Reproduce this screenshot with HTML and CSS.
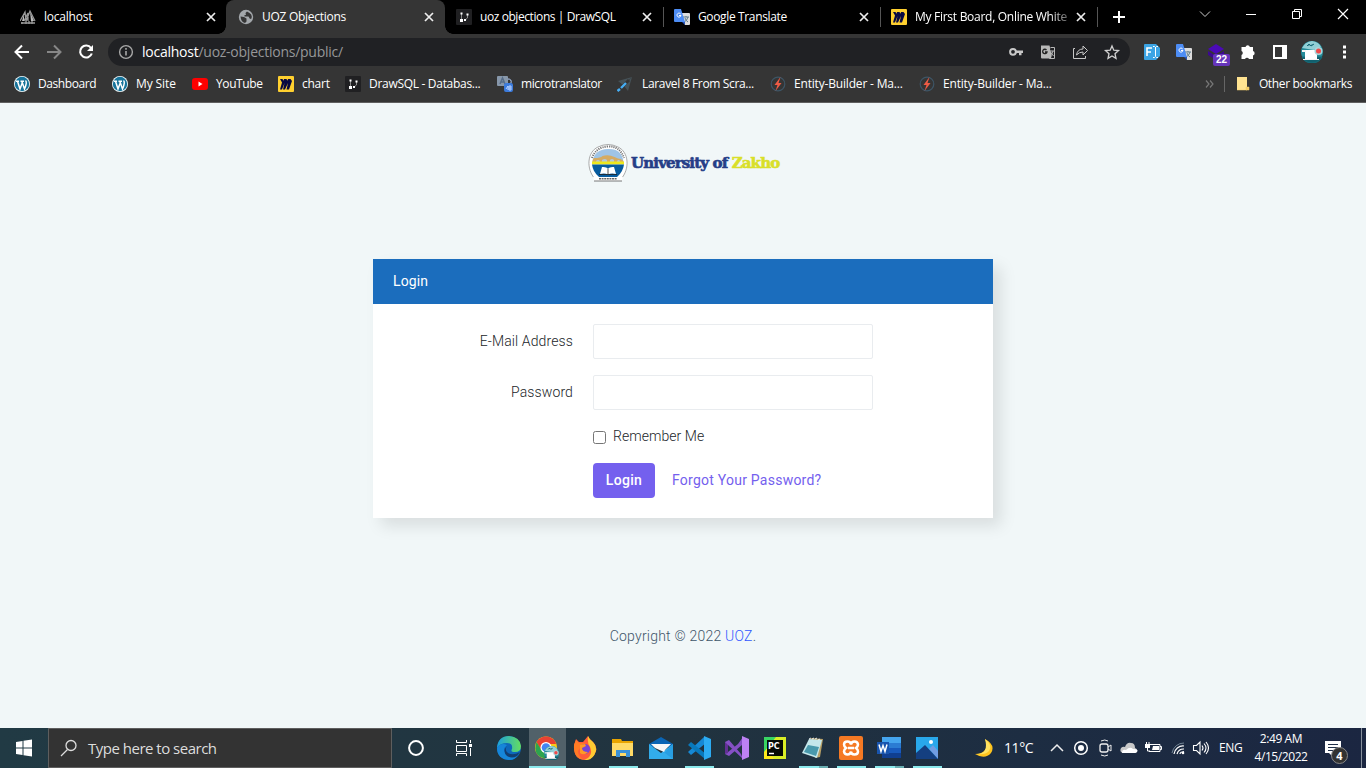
FILE: index.html
```html
<!DOCTYPE html>
<html lang="en">
<head>
<meta charset="utf-8">
<title>UOZ Objections</title>
<link rel="stylesheet" href="styles.css">
</head>
<body>
<svg class="defs" width="0" height="0" aria-hidden="true">
  <defs>
    <symbol id="x" viewBox="0 0 16 16"><path d="M4 4l8 8M12 4l-8 8" stroke="#eee" stroke-width="1.7"/></symbol>
    <symbol id="draw" viewBox="0 0 16 16"><rect width="16" height="16" rx="1" fill="#202022"/><path d="M5.500 4v7M11.500 5v4l-2.500 2" stroke="#888" fill="none"/><path d="M4.500 3.500h2v2h-2zM4 10h3v3H4zM10.500 4.500h2v2h-2zM8 10h2v2H8z" fill="#fff"/></symbol>
    <symbol id="trans" viewBox="0 0 16 16"><path d="M7 4h8q1 0 1 1v10q0 1-1 1h-4z" fill="#ddd"/><path d="M9 8h6M12 7v1M14 8q-1 4-4 5M11 9q1 3 3 4" stroke="#607d8b" fill="none"/><path d="M1 0h6l4 13H1q-1 0-1-1V1q0-1 1-1z" fill="#4d8df5"/><path d="M6.700 5A2 2 0 1 0 7 6.500H5" stroke="#fff" fill="none"/><path d="M8 13h3v3z" fill="#2855b8"/></symbol>
    <symbol id="miro" viewBox="0 0 16 16"><rect width="16" height="16" rx="1" fill="#ffd02f"/><path d="M2 3h2.500l1 1.800L6 3h2.500l1 1.800.5-1.800h2.500L14 5l-3 8.500H8.500L10 7l-3 6.500H5L6.500 7 4 13.500H2L4 6.500z" fill="#090942"/></symbol>
    <symbol id="wp" viewBox="0 0 16 16"><circle cx="8" cy="8" r="8" fill="#f2fafc"/><circle cx="8" cy="8" r="7.200" fill="#17749b"/><path d="M2 5.200h3M6.500 5.200h3.500M3.500 5.200L6 13l2.200-6M7.800 5.200L10.500 13q3-7 1-8.500" stroke="#fff" stroke-width="1.500" fill="none"/></symbol>
    <symbol id="bolt" viewBox="0 0 16 16"><circle cx="8" cy="8" r="6.800" fill="none" stroke="#3d5566" stroke-width="1.200"/><path d="M10.500 1L4.500 9h3l-2 6 6-8H8.500z" fill="#ef5b45"/></symbol>
    <symbol id="avatar" viewBox="0 0 22 22"><circle cx="11" cy="11" r="11" fill="#258b99"/><path d="M1 7q3-6 10-7 7 1 9 6l-7 3z" fill="#92d0d6"/><path d="M6 5l2-2 2 2 3-2M1 16h20q-3 6-10 6T1 16z" fill="#12606e" stroke="#166b79"/><rect x="4" y="9" width="12" height="9" fill="#fff"/><path d="M1 9h4v2H1zM2 18h16v1H2z" fill="#f5f5f5"/><circle cx="17.500" cy="10" r="4" fill="#a9d6da"/><circle cx="17.500" cy="10" r="2.500" fill="#ee4b4b"/></symbol>
  </defs>
</svg>

<header class="browser">
  <div class="tabs">
    <div class="tab t1"><svg class="fav" viewBox="0 0 16 16"><path d="M0 12l5-9 1 9 4-10 5 10M4 12l4-8v8M1 14h14M2 13v2M6 12v3M9 12v3M12 12v3" stroke="#999" fill="none" stroke-width="1.300"/><path d="M10 3l4 9h-3zM4 5v7H2z" fill="#bbb"/></svg><span class="title">localhost</span><svg class="close"><use href="#x"/></svg></div>
    <div class="tab t2 active"><svg class="fav" viewBox="0 0 16 16"><circle cx="8" cy="8" r="7.200" fill="#a3a7ab"/><path d="M2.500 7.500L6 8l2.500 1.500v3L7 14Q3 13 2.500 7.500zM9 2.500L7.500 4 8 6H6.500v1.500h4L12 10l1.500-.5Q15 5 9 2.500z" fill="#353535"/></svg><span class="title">UOZ Objections</span><svg class="close"><use href="#x"/></svg></div>
    <div class="tab t3"><svg class="fav"><use href="#draw"/></svg><span class="title">uoz objections | DrawSQL</span><svg class="close"><use href="#x"/></svg></div>
    <div class="tab t4 sep"><svg class="fav"><use href="#trans"/></svg><span class="title">Google Translate</span><svg class="close"><use href="#x"/></svg></div>
    <div class="tab t5 sep"><svg class="fav"><use href="#miro"/></svg><span class="title fade">My First Board, Online White</span><svg class="close"><use href="#x"/></svg></div>
    <svg class="plus" viewBox="0 0 44 34"><path d="M.5 7v20" stroke="#555"/><path d="M16 17h12M22 11v12" stroke="#fff" stroke-width="2"/></svg>
    <div class="controls">
      <svg viewBox="0 0 46 28"><path d="M18 11.500l5 5 5-5" stroke="#ccc" fill="none"/></svg>
      <svg viewBox="0 0 46 28"><path d="M18 14.500h10" stroke="#fff"/></svg>
      <svg viewBox="0 0 46 28"><path d="M18.500 11.500h7v7h-7zM20.500 11V9.500h7v7H26" stroke="#fff" fill="none"/></svg>
      <svg viewBox="0 0 46 28"><path d="M18 9l10 10M28 9L18 19" stroke="#fff" stroke-width="1.200"/></svg>
    </div>
  </div>
  <div class="toolbar">
    <div class="nav">
      <svg viewBox="0 0 32 36"><path d="M29 18H16M22 11.500L15.500 18l6.500 6.500" stroke="#fff" stroke-width="2" fill="none"/></svg>
      <svg viewBox="0 0 32 36"><path d="M15 18h13M22 11.500l6.500 6.500-6.500 6.500" stroke="#878787" stroke-width="2" fill="none"/></svg>
      <svg viewBox="0 0 32 36"><path d="M27 14a6 6 0 1 0 .8 5.500" stroke="#fff" stroke-width="2.100" fill="none"/><path d="M29 11v6h-6z" fill="#fff"/></svg>
    </div>
    <div class="omnibox">
      <svg class="info" viewBox="0 0 16 16"><circle cx="8" cy="8" r="6.400" fill="none" stroke="#a8a8a8" stroke-width="1.400"/><path d="M8 7v4.500M8 4v1.700" stroke="#a8a8a8" stroke-width="1.600"/></svg>
      <span class="url"><b>localhost</b>/uoz-objections/public/</span>
      <svg class="act" viewBox="0 0 32 28"><path d="M15 12.500h8v2.500h-1.500v2.300H19V15h-4z" fill="#c8c8c8"/><circle cx="13" cy="13.800" r="2.900" stroke="#c8c8c8" stroke-width="2" fill="none"/></svg>
      <svg class="act" viewBox="0 0 32 28"><path d="M9 7.500h8.500l3 13H10q-1 0-1-1z" fill="#b8b8b8"/><path d="M18.500 9.500h4v11h-5l-1-2.500" stroke="#b8b8b8" fill="none"/><path d="M14.500 12a2.200 2.200 0 1 0 .5 2H13" stroke="#222" stroke-width="1.300" fill="none"/><path d="M18 11h4v9h-3l1-3z" fill="#202124"/><path d="M17 13h5M21 13q-1 4-3 4M18.500 14l3 4" stroke="#b8b8b8" fill="none"/></svg>
      <svg class="act" viewBox="0 0 32 28"><path d="M11 10.500H9.500v10h12V18" stroke="#c8c8c8" fill="none"/><path d="M12.500 17q1-6 6.500-6V8l4.500 4.500L19 17v-3q-4 0-6.500 3z" stroke="#c8c8c8" fill="none"/></svg>
      <svg class="act" viewBox="0 0 32 28"><path d="M16 8l1.800 4.200 4.700.4-3.500 3.100 1 4.600-4-2.400-4 2.400 1-4.600-3.500-3.100 4.700-.4z" stroke="#d0d0d0" stroke-width="1.300" fill="none"/></svg>
    </div>
    <div class="exts">
      <svg viewBox="0 0 32 36"><path d="M9 10h11l4 4v8l-4 4H9q-1 0-1-1V11q0-1 1-1z" fill="#3ba4e4"/><path d="M11 22v-8h5M11 18h4" stroke="#fff" stroke-width="1.600" fill="none"/><path d="M17 12.500h1.500l1 1 1-1H22M19.500 13v9M17 23.500h1.500l1-1 1 1H22" stroke="#fff" fill="none"/></svg>
      <svg viewBox="0 0 32 36"><use href="#trans" x="8" y="10" width="16" height="16"/></svg>
      <div class="badged"><svg viewBox="0 0 32 36"><path d="M16 10l8 5-8 5-8-5z" fill="#4b0ab8"/><path d="M8 17l8 5 8-5v4l-8 5-8-5z" fill="#3c0992"/></svg><span class="badge">22</span></div>
      <svg viewBox="0 0 32 36"><path d="M10 13h3.500a2.300 2.300 0 0 1 4.400 0H21v4a2.300 2.300 0 0 1 0 4.400V25h-4a2.200 2.200 0 0 0-4 0H9.500v-4a2.200 2.200 0 0 0 0-4V13z" fill="#fff"/></svg>
      <svg viewBox="0 0 32 36"><path d="M9 11h14v14H9zM11 13v10h7V13z" fill="#fff" fill-rule="evenodd"/></svg>
      <svg viewBox="0 0 32 36"><use href="#avatar" x="5" y="7" width="22" height="22"/></svg>
      <svg viewBox="0 0 32 36"><path d="M15 11.500h3v3h-3zM15 16.500h3v3h-3zM15 21.500h3v3h-3z" fill="#fff"/></svg>
    </div>
  </div>
  <div class="bookmarks">
    <div class="bm b1"><svg><use href="#wp"/></svg><span>Dashboard</span></div>
    <div class="bm b2"><svg><use href="#wp"/></svg><span>My Site</span></div>
    <div class="bm b3"><svg viewBox="0 0 16 16"><rect y="2" width="16" height="12" rx="3" fill="#f00"/><path d="M6.500 5.500v5l4-2.500z" fill="#fff"/></svg><span>YouTube</span></div>
    <div class="bm b4"><svg><use href="#miro"/></svg><span>chart</span></div>
    <div class="bm b5"><svg><use href="#draw"/></svg><span>DrawSQL - Databas...</span></div>
    <div class="bm b6"><svg viewBox="0 0 16 16"><rect width="11" height="10" rx="1" fill="#8797aa"/><path d="M3 8l2.500-6L8 8M4 6h3" stroke="#566c88" stroke-width="1.500" fill="none"/><rect x="7" y="7" width="9" height="9" rx="2" fill="#3c7bdc"/><path d="M9 13l2-3v4M12 10h2v4h-2zM12 12h2M11 3q4 0 3 4" stroke="#b7d1ff" fill="none"/></svg><span>microtranslator</span></div>
    <div class="bm b7"><svg viewBox="0 0 16 16"><path d="M15 1L1 5l5 4zM15 1l-4 14-4-5z" fill="#465258"/><path d="M12 4L5 11" stroke="#353535" stroke-width="3"/><path d="M9 7l-5 5M3 13l-2.500 2" stroke="#46aef5" stroke-width="2.400"/></svg><span>Laravel 8 From Scra...</span></div>
    <div class="bm b8"><svg><use href="#bolt"/></svg><span>Entity-Builder - Ma...</span></div>
    <div class="bm b9"><svg><use href="#bolt"/></svg><span>Entity-Builder - Ma...</span></div>
    <div class="others"><svg class="more" viewBox="0 0 10 10"><path d="M1 1.500L4 5 1 8.500M5 1.500L8 5 5 8.500" stroke="#777" fill="none" stroke-width="1.200"/></svg><i></i><svg viewBox="0 0 16 16"><path d="M2 1h10v10h2v3H2z" fill="#ffe391"/><path d="M11 11h3v3h-3zM2 14h10" fill="#f3cd68" stroke="#f3cd68" stroke-width=".5"/></svg><span>Other bookmarks</span></div>
  </div>
</header>

<main class="page">
  <div class="brand">
    <svg viewBox="0 0 40 40">
      <path d="M7 36C-2 26-1 9 10 4q10-5 20 0c11 5 12 22 3 32z" fill="#fff" stroke="#888" stroke-width=".7"/>
      <path d="M4 15Q8 4 20 3.500T36 15" fill="none" stroke="#777" stroke-width="2" stroke-dasharray="1.200 1"/>
      <path d="M4.500 19Q6 6.500 20 6t15.500 13z" fill="#9fc4e6"/>
      <path d="M4.500 19q0-4 2-4 6 0 8-2 6-2 12 1 4 2 6 2 3 1 3 3z" fill="#d5ab62"/>
      <path d="M8 19v-1q2-2 4 0v1zM14 19v-2q3-2 5 0v2zM22 19v-2q2-2 4 0v2zM29 19v-1q2-2 3 0v1z" fill="#b5c8d8"/>
      <path d="M4 18.500h32v3H4z" fill="#eee81c"/>
      <path d="M4 21.500h32Q35 29 29 34H11Q5 29 4 21.500z" fill="#075b9e"/>
      <path d="M12 31l2-7q4-.5 6 1.500 2-2 6-1.500l2 7q-5-1-8 .5-3-1.500-8-.5z" fill="#fff"/><path d="M20 25.500v6M11 31.500h18" stroke="#222" stroke-width=".8"/>
      <path d="M5 34h30l-1 4H6z" fill="#fff"/><path d="M11 35.800h18" stroke="#666" stroke-width="1.600" stroke-dasharray="2 .6"/><path d="M6 38h28" stroke="#555" stroke-width=".8"/>
    </svg>
    <strong>University of <em>Zakho</em></strong>
  </div>
  <form class="card">
    <div class="card-head">Login</div>
    <div class="card-body">
      <div class="row"><label for="email">E-Mail Address</label><input id="email" type="email"></div>
      <div class="row"><label for="pw">Password</label><input id="pw" type="password"></div>
      <div class="remember"><input id="rem" type="checkbox"><label for="rem">Remember Me</label></div>
      <div class="actions"><button type="button">Login</button><a>Forgot Your Password?</a></div>
    </div>
  </form>
  <footer>Copyright © 2022 <a>UOZ</a>.</footer>
</main>

<div class="taskbar">
  <svg class="start" viewBox="0 0 48 40"><path d="M16 14l6.500-1v6.500H16zM23.500 12.800L32 11.500v8h-8.500zM16 20.500h6.500V27L16 26zM23.500 20.500H32v8l-8.500-1.300z" fill="#fff"/></svg>
  <div class="search"><svg viewBox="0 0 18 18"><circle cx="11" cy="6.500" r="5" fill="none" stroke="#ddd" stroke-width="1.300"/><path d="M7.500 10.500L1 17" stroke="#ddd" stroke-width="1.300"/></svg><span>Type here to search</span></div>
  <svg class="wide" viewBox="0 0 48 40"><circle cx="24" cy="20" r="6.900" fill="none" stroke="#fff" stroke-width="2"/></svg>
  <svg class="wide" viewBox="0 0 48 40"><path d="M16.500 12v2.500h10V12M16.500 17.500h10v6h-10zM16.500 28v-2.500h10V28M30.500 12v3M30.500 20v8" stroke="#fff" fill="none"/><path d="M29 16h3v3h-3z" fill="#fff"/></svg>
  <div class="apps">
    <div class="app"><svg viewBox="0 0 24 24"><defs><linearGradient id="eg"><stop stop-color="#1c9fdc"/><stop offset="1" stop-color="#64dd60"/></linearGradient></defs><circle cx="12" cy="12" r="12" fill="#0d68bb"/><path d="M0 12Q1 0 12 0q11 1 12 10 0 6-6 6-5 0-3-3 1-6-5-6Q3 7 0 12z" fill="url(#eg)"/><path d="M10 9q-6 5 0 10 5 3 11-1-2 6-9 6Q0 23 0 12 4 6 10 9z" fill="#1686d9"/><path d="M10 10q-3 4 1 7 5 3 12-1l-3 4q-5 3-10 0-5-5 0-10z" fill="#123e70"/></svg></div>
    <div class="app current"><svg viewBox="0 0 24 24"><circle cx="11" cy="11.500" r="11" fill="#fbc918"/><path d="M1.500 6Q5 .5 11 .5T20.500 6L21 8H11l-5 6z" fill="#e84133"/><path d="M1.500 6l5 8 6 2-3 6.500Q-3 19 1.500 6z" fill="#2da44f"/><circle cx="11" cy="11.500" r="5.500" fill="#fff"/><circle cx="11" cy="11.500" r="4.300" fill="#4285f4"/><use href="#avatar" x="9" y="10" width="15" height="15"/></svg><i></i></div>
    <div class="app"><svg viewBox="0 0 24 24"><path d="M1 9l2-6 3 3h4l5-6q1 3 5 6 4 4 3 9-3 9-12 9T1 13z" fill="#ff5c3a"/><path d="M15 0q1 3 5 6 4 4 3 9-3 10-12 9 10-4 6-13-3-4-2-11z" fill="#ffca32"/><path d="M1 9l2-5 3 3h6l-4 4-3 4q0 6 6 9Q0 22 1 9z" fill="#ff7b24"/><circle cx="12" cy="13" r="5" fill="#7544d8"/><path d="M7 9l5-1 1 2-4 2q0 4 6 4-4 4-8 1z" fill="#ff9a24"/></svg></div>
    <div class="app"><svg viewBox="0 0 24 24"><path d="M1 3h9l1 2h11v5H1z" fill="#e9a400"/><path d="M1 7h21v13H1z" fill="#ffda67"/><path d="M5 14h14v7h-4v-4H9v4H5z" fill="#3a91d7"/></svg><i></i></div>
    <div class="app"><svg viewBox="0 0 24 24"><path d="M0 8l12-7 12 7v3H0z" fill="#0b65b4"/><path d="M0 8v15h24V8L12 17z" fill="#32aceb"/><path d="M2 8h20l-6 6-1 2-9-4z" fill="#f8f8f8"/><path d="M12 14l3 3 9-9v15z" fill="#1785d1" opacity=".35"/></svg></div>
    <div class="app"><svg viewBox="0 0 24 24"><path d="M17 1L1 16l3 3L19 7z" fill="#1689d5"/><path d="M1 9l3-3 15 12-1 5z" fill="#0879bd"/><path d="M17 0l7 3v18l-7 3z" fill="#2cabf2"/></svg><i></i></div>
    <div class="app"><svg viewBox="0 0 24 24"><path d="M0 6l4-2 12 14 2 5L3 9v7l10-8 5-7-1 8L4 20l-4-2z" fill="#8550c5"/><path d="M0 6l3 3v8l-3 1z" fill="#633095"/><path d="M17 0l7 3v18l-7 3z" fill="#bd81f4"/></svg></div>
    <div class="app"><svg viewBox="0 0 24 24"><rect x="1" y="1" width="22" height="22" fill="#d9ee26"/><path d="M1 8v15h10z" fill="#ffe91b"/><path d="M1 1h12L1 16z" fill="#38d663"/><rect x="4" y="4" width="16" height="16" fill="#060b05"/><path d="M6 17.500h5" stroke="#fff" stroke-width="1.500"/><text x="5" y="12.500" class="pc">PC</text></svg></div>
    <div class="app"><svg viewBox="0 0 24 24"><path d="M10 2l12 1-3 18-5 1z" fill="#b8a066"/><path d="M8 3l13 1-5 18-15-5z" fill="#c5e7eb"/><path d="M7 9l11 2-3 9-12-4z" fill="#4999ac"/><path d="M8 3l2-1M11 3l2-1M14 3l2-1M17 4l2-1" stroke="#eee"/></svg><i class="multi"></i></div>
    <div class="app"><svg viewBox="0 0 24 24"><rect width="24" height="24" rx="2" fill="#f57924"/><path d="M8.500 5.500q3 0 3.500 3 .5-3 3.500-3T19 8.500q0 2-2 3.500 2 1.500 2 3.500 0 3-3.500 3t-3.500-3q-.5 3-3.500 3T5 15.500Q5 13.500 7 12 5 10.500 5 8.500q0-3 3.500-3zM9 12h6" stroke="#fff" stroke-width="2.500" fill="none"/></svg><i></i></div>
    <div class="app"><svg viewBox="0 0 24 24"><path d="M5 1h19v6H5z" fill="#45a5ee"/><path d="M5 7h19v5H5z" fill="#2b7cd3"/><path d="M5 12h19v5H5z" fill="#185abd"/><path d="M5 17h19v5H5z" fill="#103f91"/><rect y="6" width="12" height="12" fill="#1854ae"/><path d="M2 8.500l2 7 2-6 2 6 2-7" stroke="#fff" stroke-width="1.500" fill="none"/></svg><i class="multi"></i></div>
    <div class="app"><svg viewBox="0 0 24 24"><rect x="1" y="1" width="22" height="22" fill="#29a8eb"/><path d="M14 13l4-4 5 6v8z" fill="#719de2"/><path d="M1 17l9-8 13 14H1z" fill="#143f80"/><circle cx="16" cy="6" r="2" fill="#fff"/></svg><i></i></div>
  </div>
  <div class="tray">
    <svg class="moon" viewBox="0 0 18 18"><path d="M10 0q11 6 6 14-6 7-16 1 7 0 10-4t0-11z" fill="#ffc41e"/><path d="M10 0q8 6 4 12-4 4-12 3 6 0 8-4t0-11z" fill="#ffe261"/></svg>
    <span class="temp">11°C</span>
    <svg class="ti" viewBox="0 0 24 24"><path d="M6 15l6-6 6 6" stroke="#eee" stroke-width="1.500" fill="none"/></svg>
    <svg class="ti" viewBox="0 0 24 24"><circle cx="12" cy="12" r="6.300" stroke="#fff" stroke-width="1.500" fill="none"/><circle cx="12" cy="12" r="3" fill="#fff"/></svg>
    <svg class="ti" viewBox="0 0 24 24"><rect x="7" y="8" width="8" height="8" rx="2" stroke="#eee" stroke-width="1.300" fill="none"/><path d="M15 11l3-2v6l-3-2M8 5q4-2 7 0M8 19q4 2 7 0" stroke="#eee" fill="none"/></svg>
    <svg class="ti" viewBox="0 0 24 24"><path d="M6 17q-4-1-2-5 2-2 4-1 2-5 6-4 4 0 4 5 4 2 1 5z" fill="#c8c8c8"/><path d="M5 17q0-4 4-3 4-4 7-1 6 0 4 3l-2 1z" fill="#fff"/></svg>
    <svg class="ti" viewBox="0 0 24 24"><path d="M9 8.500h10v7H8M19 10.500h1.500v3H19" stroke="#fff" fill="none"/><path d="M12 10h6v4h-7zM4 8h5v4H4z" fill="#fff"/><path d="M5.500 6v3M8 6v3M6.500 11v4H9" stroke="#fff" fill="none"/></svg>
    <svg class="ti wifi" viewBox="0 0 24 24"><path d="M6 17A12 12 0 0 1 18 7" stroke="#718393" fill="none"/><path d="M8 18A9 9 0 0 1 18 10M11 18A7 7 0 0 1 18 13M14 18Q14 16 18 15.500" stroke="#fff" fill="none" stroke-width="1.200"/><circle cx="17" cy="17" r="1.300" fill="#fff"/></svg>
    <svg class="ti" viewBox="0 0 24 24"><path d="M3.500 9.500h3L10 6v12l-3.500-3.500h-3zM12 9.500q2 2.500 0 5M14 7.500q4 4.500 0 9M16 6q5 6 0 12" stroke="#fff" fill="none" stroke-width="1.100"/></svg>
    <span class="lang">ENG</span>
    <div class="clock"><span>2:49 AM</span><span>4/15/2022</span></div>
    <div class="notify"><svg viewBox="0 0 18 17"><path d="M1 1h16v12H9v4l-4-4H1z" fill="#fff"/><path d="M4 4.500h10M4 7.500h10M4 10.500h7" stroke="#20304a"/></svg><b>4</b></div>
  </div>
</div>
</body>
</html>
```
FILE: styles.css
```css
* { box-sizing: border-box; }
body { margin: 0; width: 1366px; height: 768px; overflow: hidden; display: flex; flex-direction: column; background: #f1f7f8; }
svg { display: block; flex: none; }
i { font-style: normal; }
.defs { position: absolute; }

.browser { height: 103px; flex: none; background: #353535; border-bottom: 1px solid #606060; color: #fff; font: 12px/16px "Open Sans", "Noto Sans", sans-serif; white-space: nowrap; }
.tabs { display: flex; height: 34px; background: #000; }
.tab { display: flex; align-items: center; height: 34px; padding-right: 8px; position: relative; }
.tab .fav, .close { width: 16px; height: 16px; }
.title { flex: 1; margin-left: 8px; letter-spacing: -.28px; }
.t1 .title { letter-spacing: -.22px; }
.t3 .title { letter-spacing: -.42px; }
.t4 .title { letter-spacing: -.36px; }
.t5 .title { letter-spacing: -.28px; }
.fade { -webkit-mask-image: linear-gradient(90deg, #000 85%, transparent 103%); mask-image: linear-gradient(90deg, #000 85%, transparent 103%); }
.t1 { width: 226px; padding-left: 20px; padding-right: 7px; }
.t2 { width: 219px; padding-left: 12px; }
.t3 { width: 218px; padding-left: 11px; }
.t4 { width: 217px; padding-left: 11px; }
.t5 { width: 216px; padding-left: 11px; padding-right: 7px; }
.active { background: #353535; border-radius: 8px 8px 0 0; }
.active::before, .active::after { content: ""; position: absolute; bottom: 0; width: 8px; height: 8px; }
.active::before { left: -8px; background: radial-gradient(circle at 0 0, #000 7.5px, #353535 8px); }
.active::after { right: -8px; background: radial-gradient(circle at 100% 0, #000 7.5px, #353535 8px); }
.sep { background: linear-gradient(#555, #555) 0 7px / 1px 20px no-repeat; }
.plus { width: 44px; height: 34px; margin-left: 1px; }
.controls { display: flex; margin-left: auto; }
.controls svg { width: 46px; height: 28px; }

.toolbar { display: flex; align-items: center; height: 36px; }
.nav { display: flex; width: 108px; }
.nav svg { width: 32px; height: 36px; }
.omnibox { display: flex; align-items: center; width: 1022px; height: 28px; padding: 0 2px 0 10px; border-radius: 14px; background: #202124; }
.info { width: 16px; height: 16px; }
.url { flex: 1; margin-left: 8px; color: #969799; font-size: 14px; line-height: 20px; letter-spacing: -.25px; }
.url b { font-weight: 400; color: #fff; }
.act { width: 32px; height: 28px; }
.exts { display: flex; margin-left: 6px; }
.exts svg { width: 32px; height: 36px; }
.badged { position: relative; }
.badge { position: absolute; left: 13px; top: 20px; width: 17px; height: 12px; border-radius: 2px; background: #6635bb; font: bold 10px/12px "Liberation Sans", sans-serif; text-align: center; }

.bookmarks { display: flex; align-items: center; height: 28px; padding: 0 14px; letter-spacing: -.25px; }
.bm { display: flex; align-items: center; gap: 8px; flex: none; }
.bm svg, .others svg { width: 16px; height: 16px; }
.b1 { width: 98px; letter-spacing: -.42px; }
.b2 { width: 80px; letter-spacing: -.1px; }
.b3 { width: 86px; letter-spacing: -.4px; }
.b4 { width: 67px; }
.b5 { width: 152px; letter-spacing: -.3px; }
.b6 { width: 120px; letter-spacing: -.42px; }
.b7 { width: 153px; gap: 9px; letter-spacing: -.34px; }
.b8 { width: 149px; letter-spacing: -.18px; }
.b9 { letter-spacing: -.18px; }
.others { display: flex; align-items: center; margin-left: auto; letter-spacing: -.36px; }
.others .more { width: 10px; height: 10px; }
.others i { width: 1px; height: 16px; margin: 0 10px 0 9px; background: #666; }
.others span { margin-left: 8px; }

.page { height: 625px; flex: none; display: flex; flex-direction: column; align-items: center; color: #3e5569; font: 300 14px/21px Roboto, sans-serif; }
.brand { display: flex; align-items: center; width: 190px; height: 40px; margin-top: 40px; }
.brand svg { width: 40px; height: 40px; }
.brand strong { margin-left: 3px; color: #253e87; font: bold 15px/20px "DejaVu Serif", serif; white-space: nowrap; letter-spacing: -.85px; -webkit-text-stroke: .6px; }
.brand em { color: #d9df29; font-style: normal; }
.card { width: 620px; height: 259px; margin: 76px 0 0; background: #fff; box-shadow: 8px 8px 15px rgba(0, 0, 0, .1); }
.card-head { height: 45px; padding: 12px 20px; background: #1b6dbd; color: #fff; font-weight: 400; letter-spacing: .1px; }
.card-body { padding: 20px; color: #212529; letter-spacing: .12px; }
.row { display: flex; align-items: center; height: 35px; margin-bottom: 16px; }
.row label { width: 180px; text-align: right; margin-right: 20px; }
.row input { width: 280px; height: 35px; border: 1px solid #e9ecef; border-radius: 2px; background: #fff; }
.remember { display: flex; align-items: center; height: 21px; margin-left: 200px; gap: 7px; letter-spacing: .05px; }
.remember input { width: 13px; height: 13px; margin: 1px 0 0; }
.actions { display: flex; align-items: center; margin: 16px 0 0 200px; gap: 17px; color: #7460ee; font-weight: 400; letter-spacing: .24px; }
.actions button { width: 62px; height: 35px; padding: 0 0 1px; border: 0; border-radius: 4px; background: #7460ee; color: #fff; font: 500 14px Roboto, sans-serif; letter-spacing: .3px; }
footer { margin-top: 108px; letter-spacing: .22px; }
footer a { color: #3157ff; }

.taskbar { height: 40px; flex: none; display: flex; background: linear-gradient(90deg, #213a44 0, #21333f 50%, #1d2d42 75%, #1b2641); color: #fff; font: 12px/18px "Open Sans", sans-serif; }
.start, .wide { width: 48px; height: 40px; }
.search { width: 344px; height: 40px; display: flex; align-items: center; padding-left: 11px; border: 1px solid #5e5e5e; background: #333; color: #ddd; font-size: 15px; letter-spacing: -.5px; }
.search svg { width: 18px; height: 18px; margin-right: 10px; }
.apps { display: flex; margin-left: 2px; }
.app { width: 38px; height: 40px; display: flex; align-items: center; justify-content: center; position: relative; }
.app svg { width: 24px; height: 24px; }
.app i { position: absolute; bottom: 0; left: 5px; width: 29px; height: 2px; background: #8be9ec; }
.app .multi { background: linear-gradient(90deg, #8be9ec 20px, #69aeb2 20px); }
.current { background: linear-gradient(#516169, #516169) 1px 0 / 37px 40px no-repeat; }
.app.current i { left: 1px; width: 37px; }
.pc { font: bold 8px "DejaVu Sans", sans-serif; fill: #fff; }
.tray { flex: 1; display: flex; align-items: center; padding-left: 29px; padding-right: 4px; background: linear-gradient(#87909c, #87909c) 415px 0 / 1px 40px no-repeat; }
.moon { width: 18px; height: 18px; }
.temp { width: 41px; margin-left: 11px; font-size: 14px; letter-spacing: -.4px; }
.ti { width: 24px; height: 24px; }
.wifi { margin-left: 1px; }
.lang { width: 30px; margin-left: 5px; letter-spacing: -.4px; }
.clock { width: 64px; display: flex; flex-direction: column; text-align: center; letter-spacing: -.42px; }
.notify { position: relative; margin-left: 11px; }
.notify svg { width: 18px; height: 17px; }
.notify b { position: absolute; left: 7px; top: 7px; width: 17px; height: 17px; border: 1px solid #888; border-radius: 50%; background: #333; font-size: 11px; line-height: 15px; text-align: center; }
```
